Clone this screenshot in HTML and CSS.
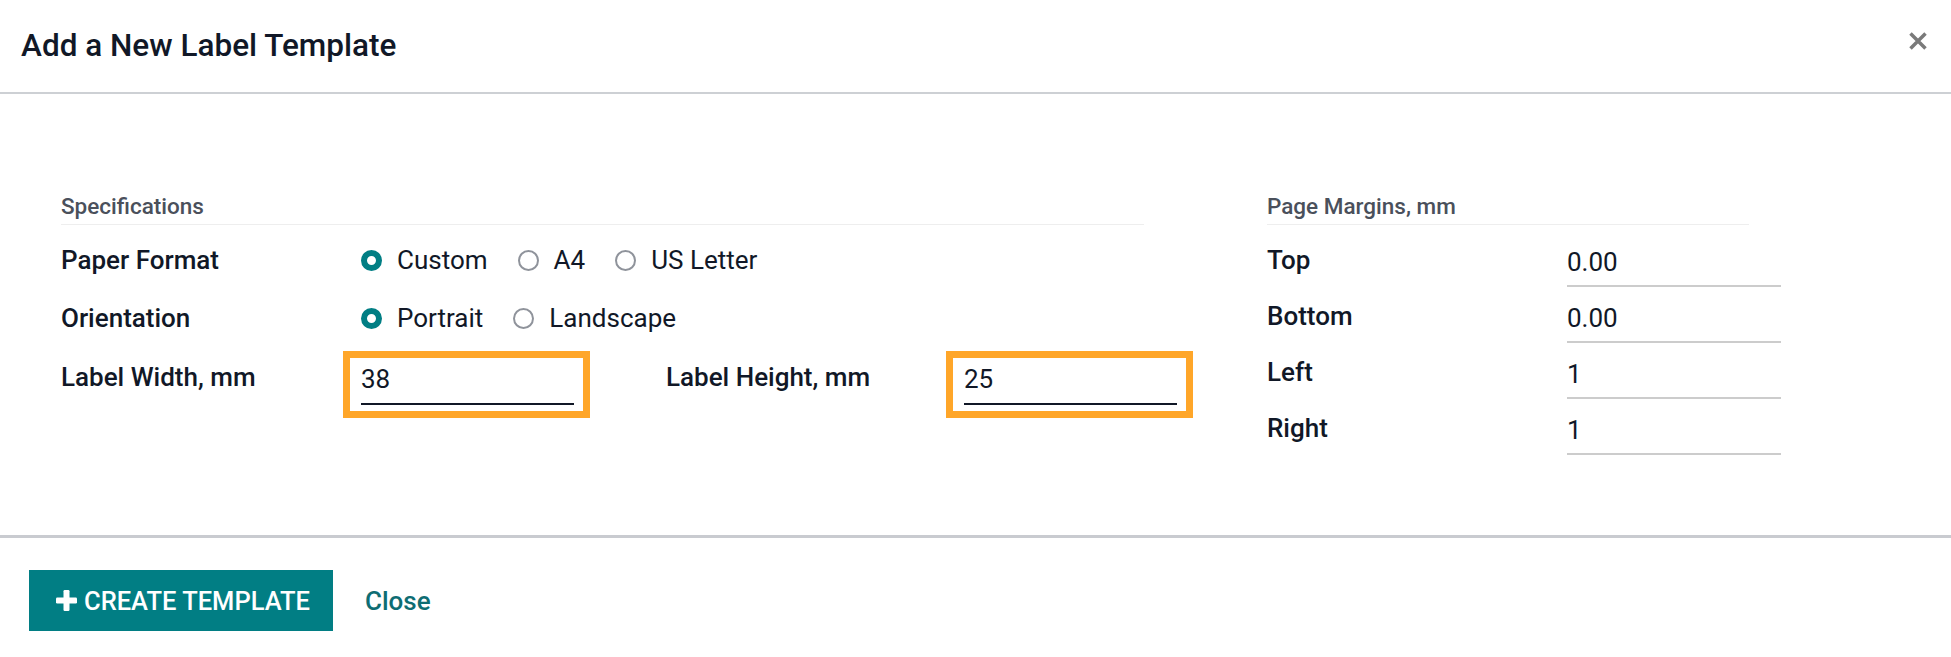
FILE: index.html
```html
<!DOCTYPE html>
<html lang="en">
<head>
<meta charset="utf-8">
<title>Add a New Label Template</title>
<link rel="stylesheet" href="styles.css">
</head>
<body>
<div class="modal">
  <header class="modal-header">
    <h4 class="modal-title">Add a New Label Template</h4>
    <button class="close-btn" aria-label="Close">
      <svg width="20" height="20" viewBox="0 0 20 20"><path d="M2.5 2.5 L17.5 17.5 M17.5 2.5 L2.5 17.5" stroke="#7a7a7a" stroke-width="3.5" fill="none"/></svg>
    </button>
  </header>

  <main class="modal-body">
    <section class="group group-main">
      <div class="separator sep-main">Specifications</div>
      <div class="form-grid main-grid">
        <div class="cell-label">Paper Format</div>
        <div class="cell-field radios span3">
          <label class="radio"><span class="dot checked"></span><span>Custom</span></label>
          <label class="radio"><span class="dot"></span><span>A4</span></label>
          <label class="radio"><span class="dot"></span><span>US Letter</span></label>
        </div>
        <div class="cell-label">Orientation</div>
        <div class="cell-field radios span3">
          <label class="radio"><span class="dot checked"></span><span>Portrait</span></label>
          <label class="radio"><span class="dot"></span><span>Landscape</span></label>
        </div>
        <div class="cell-label">Label Width, mm</div>
        <div class="cell-field">
          <div class="highlight"><div class="input input-dark">38</div></div>
        </div>
        <div class="cell-label">Label Height, mm</div>
        <div class="cell-field">
          <div class="highlight"><div class="input input-dark">25</div></div>
        </div>
      </div>
    </section>

    <section class="group group-side">
      <div class="separator sep-side">Page Margins, mm</div>
      <div class="form-grid side-grid">
        <div class="cell-label">Top</div>
        <div class="cell-field"><div class="input input-light">0.00</div></div>
        <div class="cell-label">Bottom</div>
        <div class="cell-field"><div class="input input-light">0.00</div></div>
        <div class="cell-label">Left</div>
        <div class="cell-field"><div class="input input-light">1</div></div>
        <div class="cell-label">Right</div>
        <div class="cell-field"><div class="input input-light">1</div></div>
      </div>
    </section>
  </main>

  <footer class="modal-footer">
    <button class="btn-primary">
      <svg class="plus" width="21" height="21" viewBox="0 0 21 21"><rect x="7.5" y="0" width="6" height="21" rx="1.2" fill="#fff"/><rect x="0" y="7.5" width="21" height="6" rx="1.2" fill="#fff"/></svg>
      <span>CREATE TEMPLATE</span>
    </button>
    <button class="btn-link">Close</button>
  </footer>
</div>
</body>
</html>
```

FILE: styles.css
```css
* { box-sizing: border-box; }

html, body {
  margin: 0;
  padding: 0;
  background: #ffffff;
}

body {
  font-family: Roboto, "Noto Sans", "Liberation Sans", sans-serif;
  font-size: 26px;
  color: #111827;
}

.modal {
  width: 1951px;
  min-height: 657px;
  background: #fff;
}

/* Header */
.modal-header {
  height: 94px;
  display: flex;
  align-items: flex-start;
  justify-content: space-between;
  padding: 0 23px 0 21px;
  border-bottom: 2px solid #cdd0d4;
}

.modal-title {
  margin: 0;
  padding-top: 27px;
  font-size: 31.5px;
  font-weight: 500;
  line-height: 37px;
  color: #111827;
}

.close-btn {
  margin-top: 31px;
  padding: 0;
  border: 0;
  background: transparent;
  width: 20px;
  height: 20px;
  display: block;
}
.close-btn svg { display: block; }

/* Body */
.modal-body {
  display: flex;
  align-items: flex-start;
  padding: 97px 0 68px 61px;
}

.group-main { width: 1116px; }
.group-side { width: 514px; margin-left: 90px; }

.separator {
  font-size: 22.5px;
  font-weight: 500;
  line-height: 30px;
  color: #4a505b;
  padding-bottom: 3px;
  border-bottom: 1px solid #eeeeee;
  margin-bottom: 18px;
}
.sep-main { margin-right: 33px; }
.sep-side { margin-right: 32px; }

.form-grid { display: grid; }

.main-grid {
  grid-template-columns: 300px 305px 298px 213px;
  grid-template-rows: 58px 59px 58px;
}

.side-grid {
  grid-template-columns: 300px 214px;
  grid-auto-rows: 56px;
}

.cell-label {
  font-weight: 500;
  line-height: 34px;
  align-self: start;
}

.cell-field {
  line-height: 34px;
  align-self: start;
}

.span3 { grid-column: span 3; }

/* Radios */
.radios {
  display: flex;
  align-items: center;
  height: 34px;
}

.radio {
  display: flex;
  align-items: center;
  margin-right: 30px;
}

.dot {
  width: 21px;
  height: 21px;
  border-radius: 50%;
  border: 2px solid #8f939b;
  background: #fff;
  margin-right: 15px;
  flex: none;
}
.dot.checked {
  border: 6.5px solid #017e84;
}

/* Inputs */
.input {
  line-height: 34px;
}

.input-dark {
  width: 213px;
  padding-bottom: 7px;
  border-bottom: 2px solid #111827;
}

.input-light {
  width: 214px;
  padding-top: 2px;
  padding-bottom: 6px;
  border-bottom: 2px solid #cccccc;
}

.highlight {
  display: inline-block;
  margin: -2px -9px 0 -11px;
  padding: 4px 9px 6px 11px;
  outline: 7px solid #ffa629;
  background: #fff;
}

/* Footer */
.modal-footer {
  border-top: 3px solid #c9cbd0;
  padding: 32px 29px 26px;
  display: flex;
  align-items: center;
}

.btn-primary {
  height: 61px;
  display: inline-flex;
  align-items: center;
  padding: 0 23px 0 27px;
  border: 0;
  background: #017e84;
  color: #fff;
  font-family: inherit;
  font-size: 25.5px;
  font-weight: 500;
  line-height: 34px;
}
.btn-primary .plus { margin-right: 7px; display: block; }

.btn-link {
  margin-left: 32px;
  padding: 0;
  border: 0;
  background: transparent;
  font-family: inherit;
  font-size: 26px;
  font-weight: 500;
  line-height: 34px;
  color: #0e6d73;
}
```
